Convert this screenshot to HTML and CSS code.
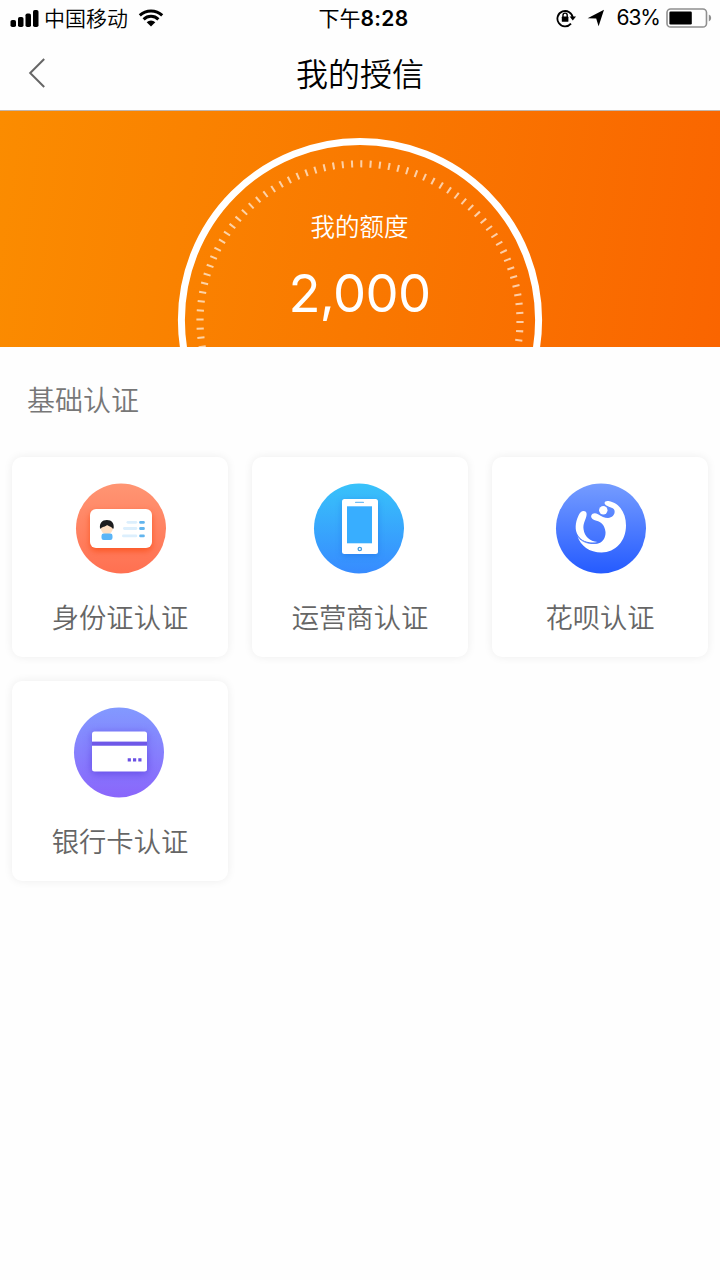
FILE: index.html
```html
<!DOCTYPE html>
<html lang="zh-CN">
  <head>
    <meta charset="UTF-8">
    <meta name="viewport" content="width=device-width, initial-scale=1.0">
    <title>我的授信</title>
    <link rel="stylesheet" href="styles.css">
  </head>
  <body>
    <div class="status-bar">
      <div class="status-left">
        <svg class="signal" width="30" height="20" viewBox="0 0 30 20">
          <rect x="0.5" y="12" width="5.5" height="7" rx="1.8" />
          <rect x="8" y="9" width="5.5" height="10" rx="1.8" />
          <rect x="15.5" y="5.5" width="5.5" height="13.5" rx="1.8" />
          <rect x="23" y="2" width="5.5" height="17" rx="1.8" />
        </svg>
        <span class="carrier">中国移动</span>
        <svg class="wifi" width="26" height="18" viewBox="0 0 26 18">
          <path d="M1.8 6.4a16.2 16.2 0 0 1 22.4 0" />
          <path d="M5.6 10.3a10.8 10.8 0 0 1 14.8 0" />
          <path class="solid" d="M13 17.4l-4.3-4.2a6.2 6.2 0 0 1 8.6 0z" />
        </svg>
      </div>
      <div class="status-time">下午<b>8:28</b></div>
      <div class="status-right">
        <svg class="lock" width="22" height="20" viewBox="0 0 22 20">
          <path class="line" d="M15 15.7a7.7 7.7 0 1 1 1.8-5.6" />
          <path d="M13.6 8.6h6.4l-3.2 4z" />
          <rect x="5.8" y="8.6" width="6.6" height="5.2" rx="0.6" />
          <path class="line thin" d="M7 9V7.2a2.1 2.1 0 0 1 4.2 0V9" />
        </svg>
        <svg class="arrow" width="18" height="18" viewBox="0 0 18 18">
          <path d="M17 0.8L11.6 17.2 9.2 9.5 0.6 9.2z" />
        </svg>
        <span class="percent">63%</span>
        <svg class="battery" width="46" height="20" viewBox="0 0 46 20">
          <rect class="shell" x="1" y="1" width="39.5" height="18" rx="3.6" />
          <rect x="3.4" y="3.6" width="22.4" height="12.8" rx="1.2" />
          <path class="cap" d="M42.8 6.6a3.6 3.6 0 0 1 0 6.8z" />
        </svg>
      </div>
    </div>

    <div class="header">
      <a class="back" href="#">
        <svg width="18" height="32" viewBox="0 0 18 32">
          <path d="M16.2 2L2.2 16l14 14" />
        </svg>
      </a>
      <h1>我的授信</h1>
    </div>

    <div class="banner">
      <svg class="gauge" width="720" height="236" viewBox="0 0 720 236">
        <circle class="ring" cx="360" cy="209" r="178.6" />
        <circle class="ticks" r="160" pathLength="1080" transform="translate(360 209.8) scale(1 0.981) rotate(-89.9)" />
      </svg>
      <div class="quota">
        <p class="quota-label">我的额度</p>
        <p class="quota-value">2,000</p>
      </div>
    </div>

    <h2>基础认证</h2>

    <div class="grid">
      <a class="card" href="#">
        <svg class="icon shift-right" width="92" height="92" viewBox="0 0 92 92">
          <defs>
            <linearGradient id="red" x1="0" y1="0" x2="0" y2="1">
              <stop offset="0" stop-color="#ff9573" />
              <stop offset="1" stop-color="#ff7051" />
            </linearGradient>
          </defs>
          <circle cx="46" cy="46.5" r="45" fill="url(#red)" />
          <rect class="shadow-red" x="15" y="27" width="62" height="39" rx="6" fill="#fff" />
          <circle cx="31.8" cy="46" r="6.2" fill="#ffdfc3" />
          <path d="M25 46.5c-.6-5.5 2-8.5 6.9-8.5s7.4 3 6.8 8.5h-1.2c-.7-2-2.8-1.5-5.6-3.5-1.2 2-5 1.5-5.9 3.5z" fill="#1d1d1f" />
          <rect x="26.5" y="51.5" width="11" height="6.500" rx="2.2" fill="#5bb5f7" />
          <rect x="51.5" y="38.9" width="10.8" height="2.8" rx="1.4" fill="#dceffd" />
          <rect x="48" y="45.1" width="14.3" height="2.8" rx="1.4" fill="#dceffd" />
          <rect x="47" y="52.5" width="15.3" height="2.8" rx="1.4" fill="#dceffd" />
          <rect x="64.2" y="38.9" width="5.6" height="2.8" rx="1.2" fill="#62b5ee" />
          <rect x="64.2" y="45.1" width="5.6" height="2.8" rx="1.2" fill="#62b5ee" />
          <rect x="64.2" y="52.5" width="5.6" height="2.8" rx="1.2" fill="#62b5ee" />
        </svg>
        <span>身份证认证</span>
      </a>
      <a class="card" href="#">
        <svg class="icon shift-left" width="92" height="92" viewBox="0 0 92 92">
          <defs>
            <linearGradient id="sky" x1="0" y1="0" x2="0" y2="1">
              <stop offset="0" stop-color="#38c2fa" />
              <stop offset="1" stop-color="#378bff" />
            </linearGradient>
          </defs>
          <circle cx="46" cy="46.5" r="45" fill="url(#sky)" />
          <rect class="shadow-blue" x="29" y="17" width="36" height="55" rx="2.5" fill="#fff" />
          <rect x="34" y="24.3" width="25" height="37" fill="#38aeff" />
          <rect x="42" y="19.8" width="9" height="1.3" rx=".6" fill="#70bdf5" />
          <circle cx="46.8" cy="67" r="1.7" fill="none" stroke="#429de0" stroke-width="1.3" />
        </svg>
        <span>运营商认证</span>
      </a>
      <a class="card" href="#">
        <svg class="icon shift-right" width="92" height="92" viewBox="0 0 92 92">
          <defs>
            <linearGradient id="blue" x1="0" y1="0" x2="0" y2="1">
              <stop offset="0" stop-color="#759cff" />
              <stop offset="1" stop-color="#255bff" />
            </linearGradient>
          </defs>
          <circle cx="46" cy="46.5" r="45" fill="url(#blue)" />
          <g fill="#fff">
            <circle cx="48.3" cy="28.3" r="4.2" />
            <path d="M50.2 22.5C48.5 20.2 50.5 18.5 53.5 19C64.5 20.8 71 31 71 43.5C71 59 60.5 70.5 46.5 70.5C34.5 70.5 25.5 64 22.4 54C27.5 60.5 36 63 43.5 61.3C48.5 60 50.8 54.5 50.5 50C50 43.5 46 40 41.5 38.8C37.5 37.8 35.5 36 36.3 33.5C37.3 30.8 40.5 30.8 43 32.2C46.5 34.3 49.5 35.9 53 35.9C57.5 35.8 60.3 32.5 59.5 28.5C58.6 24.8 53 25.5 50.2 22.5Z" />
            <path d="M23.3 34C24.8 30.5 26.5 28.9 28.8 29C31.5 29.2 32.2 31.5 31.3 34.5C30 39 27.8 42 28.6 47.5C29.6 54.5 34.5 59.3 42.5 60C34.5 61.8 26.5 59 23 53.5C19.5 48 20.3 40.5 23.3 34Z" />
          </g>
          <path d="M22 54.3C27.5 60.5 34.5 62.8 43.5 60.8" fill="none" stroke="#4d7af8" stroke-width="0.8" />
        </svg>
        <span>花呗认证</span>
      </a>
      <a class="card" href="#">
        <svg class="icon shift-left" width="92" height="92" viewBox="0 0 92 92">
          <defs>
            <linearGradient id="purple" x1="0" y1="0" x2="0" y2="1">
              <stop offset="0" stop-color="#8299ff" />
              <stop offset="1" stop-color="#8a66fb" />
            </linearGradient>
          </defs>
          <circle cx="46" cy="46.5" r="45" fill="url(#purple)" />
          <g class="shadow-purple">
            <path d="M19 35.8v-7.8a2.5 2.5 0 0 1 2.5-2.5h50a2.5 2.5 0 0 1 2.5 2.5v7.8z" fill="#fff" />
            <path d="M19 39.5h55v23.5a2.5 2.5 0 0 1-2.5 2.5h-50a2.5 2.5 0 0 1-2.5-2.5z" fill="#fff" />
          </g>
          <rect x="19" y="35.8" width="55" height="3.7" fill="#6f58e8" />
          <path d="M54.7 52.3h3.2v3.2h-3.2zM60 52.3h3.2v3.2h-3.2zM65.3 52.3h3.2v3.2h-3.2z" fill="#6a50e4" />
        </svg>
        <span>银行卡认证</span>
      </a>
    </div>
  </body>
</html>
```

FILE: styles.css
```css
:root {
  --background: #fefefe;
  --foreground: #000;
  --muted: #666;
}

* {
  box-sizing: border-box;
}

body {
  margin: 0;
  font-family: "Noto Sans CJK SC", sans-serif;
  font-weight: 350;
  background-color: var(--background);
  color: var(--foreground);
}

svg {
  display: block;
}

h1,
h2,
p {
  margin: 0;
  font-weight: 350;
}

a {
  color: inherit;
  text-decoration: none;
}

.status-bar {
  display: grid;
  grid-template-columns: 1fr auto 1fr;
  align-items: center;
  height: 35px;
  padding: 0 8px 0 10px;
  font-size: 21px;
  line-height: 34px;
}

.status-left,
.status-right {
  display: flex;
  align-items: center;
}

.status-right {
  justify-content: flex-end;
  padding-bottom: 2px;
}

.signal {
  margin-bottom: 2px;
}

.carrier {
  margin-left: 4px;
  margin-bottom: 3px;
}

.wifi {
  margin-left: 10px;
  margin-bottom: 2px;
}

.wifi path {
  fill: none;
  stroke: #000;
  stroke-width: 3;
}

.wifi .solid {
  fill: #000;
  stroke: none;
}

.status-time {
  padding: 0 0 1px 5px;
  font-weight: 400;
}

.status-time b {
  font-family: Inter, sans-serif;
  font-size: 21px;
  font-weight: 600;
  letter-spacing: 0.3px;
}

.lock .line {
  fill: none;
  stroke: #000;
  stroke-width: 1.8;
}

.lock .thin {
  stroke-width: 1.4;
}

.arrow {
  margin-left: 9px;
}

.percent {
  margin-left: 11px;
  font-family: Inter, sans-serif;
  font-size: 21px;
  font-weight: 400;
  letter-spacing: -1px;
}

.battery {
  margin-left: 6px;
}

.battery .shell {
  fill: none;
  stroke: #8f8f8f;
  stroke-width: 1.6;
}

.battery .cap {
  fill: #8f8f8f;
}

.header {
  display: grid;
  grid-template-columns: 60px 1fr 60px;
  align-items: center;
  height: 76px;
  border-bottom: 1px solid #c2b5ab;
}

.back {
  padding-left: 28px;
}

.back path {
  fill: none;
  stroke: #666;
  stroke-width: 2;
}

.header h1 {
  padding-bottom: 2px;
  font-size: 32px;
  line-height: 70px;
  text-align: center;
}

.banner {
  display: grid;
  height: 236px;
  overflow: hidden;
  background: linear-gradient(98deg, #fb8c00, #f97900 50%, #fa6500);
  color: #fff;
}

.gauge,
.quota {
  grid-area: 1 / 1;
}

.gauge circle {
  fill: none;
  stroke: #fff;
}

.gauge .ring {
  stroke-width: 7;
}

.gauge .ticks {
  stroke-width: 7.2;
  stroke-dasharray: 2.2 7.8;
  stroke-opacity: 0.65;
}

.quota {
  padding: 97px 1px 0 0;
  text-align: center;
}

.quota-label {
  font-size: 24.5px;
  line-height: 36px;
}

.quota-value {
  font-family: Inter, sans-serif;
  font-size: 52.5px;
  font-weight: 400;
  line-height: 60px;
  letter-spacing: -0.6px;
  margin-top: 19px;
}

h2 {
  padding: 34px 27px 0;
  font-size: 28px;
  line-height: 36px;
  color: #777;
}

.grid {
  display: grid;
  grid-template-columns: repeat(3, 216px);
  gap: 24px;
  padding: 40px 12px;
}

.card {
  display: flex;
  flex-direction: column;
  align-items: center;
  height: 200px;
  padding-top: 25px;
  border-radius: 10px;
  background-color: #fff;
  box-shadow: 0 0 10px rgba(0, 0, 0, 0.07);
  font-size: 27.3px;
  line-height: 36px;
  color: var(--muted);
}

.card span {
  margin-top: 24px;
}

.shift-right {
  margin-left: 2px;
}

.shift-left {
  margin-right: 2px;
}

.shadow-red {
  filter: drop-shadow(0 3px 3px rgba(250, 70, 10, 0.7));
}

.shadow-blue {
  filter: drop-shadow(0 2px 3px rgba(20, 100, 220, 0.4));
}

.shadow-purple {
  filter: drop-shadow(0 2px 4px rgba(75, 45, 215, 0.6));
}
```
